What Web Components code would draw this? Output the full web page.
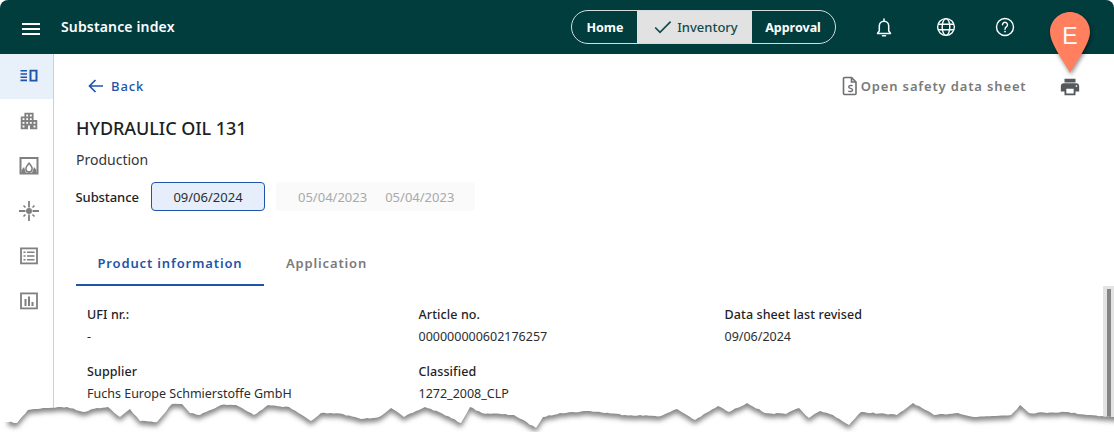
<!DOCTYPE html>
<html lang="en">
<head>
<meta charset="utf-8">
<title>Substance index</title>
<style>
  html, body { margin: 0; background: #fff; }
  body { width: 1114px; height: 432px; overflow: hidden; font-family: "Noto Sans", "Open Sans", sans-serif; }
</style>
</head>
<body>
<app-shell>
  <app-header slot="header" title="Substance index"></app-header>
  <side-nav slot="nav"></side-nav>
  <substance-page slot="main"></substance-page>
</app-shell>
<marker-pin label="E"></marker-pin>
<torn-edge></torn-edge>

<script>
// Small helper so each element only has to declare its markup.
class BaseElement extends HTMLElement {
  constructor() {
    super();
    this.attachShadow({ mode: 'open' });
  }
  connectedCallback() {
    this.shadowRoot.innerHTML = this.render();
  }
}

class AppShell extends BaseElement {
  render() {
    return `
      <style>
        :host { display: grid; grid-template-columns: 54px 1fr; grid-template-rows: 54px 378px; width: 1114px; height: 432px; }
        .head { grid-column: 1 / 3; }
      </style>
      <div class="head"><slot name="header"></slot></div>
      <slot name="nav"></slot>
      <slot name="main"></slot>
    `;
  }
}

class AppHeader extends BaseElement {
  render() {
    return `
      <style>
        :host { display: flex; align-items: center; height: 54px; background: #023d3e; color: #fff; border-radius: 8px 8px 0 0; }
        .menu { width: 18px; height: 12px; margin-left: 22px; display: flex; flex-direction: column; justify-content: space-between; position: relative; top: 2px; }
        .menu i { display: block; height: 2.4px; background: #fff; }
        h1 { margin: 0 0 0 21px; font-size: 14px; font-weight: 600; letter-spacing: .15px; flex: 1; position: relative; top: -1px; }
        .icons { display: flex; align-items: center; width: 278px; }
        .icons svg { display: block; flex: none; }
      </style>
      <div class="menu"><i></i><i></i><i></i></div>
      <h1>${this.getAttribute('title')}</h1>
      <seg-control></seg-control>
      <div class="icons">
        <svg style="margin-left:35px" width="26" height="26" viewBox="0 0 26 26" fill="none" stroke="#fff" stroke-width="1.5">
          <path d="M6.5 19.5h13l-1.8-2.6v-5a4.7 4.7 0 0 0-9.4 0v5z" stroke-linejoin="round"/>
          <path d="M13 5v2M11.5 21.7h3" stroke-linecap="round"/>
        </svg>
        <svg style="margin-left:37px" width="24" height="24" viewBox="0 0 24 24" fill="none" stroke="#fff" stroke-width="1.4">
          <circle cx="12" cy="12" r="8.4"/>
          <ellipse cx="12" cy="12" rx="3.8" ry="8.4"/>
          <path d="M4 9.2h16M4 14.8h16"/>
        </svg>
        <svg style="margin-left:35px" width="24" height="24" viewBox="0 0 24 24" fill="none" stroke="#fff" stroke-width="1.4">
          <circle cx="12" cy="12" r="8.5"/>
          <path d="M9.5 9.8a2.5 2.5 0 1 1 3.8 2.1c-.9.6-1.3 1.1-1.3 2.3" stroke-linecap="round"/>
          <circle cx="12" cy="16.6" r=".9" fill="#fff" stroke="none"/>
        </svg>
      </div>
    `;
  }
}

class SegControl extends BaseElement {
  render() {
    return `
      <style>
        :host { display: flex; height: 34px; width: 265px; box-sizing: border-box; border: 1px solid #d5dcdc; border-radius: 17px; overflow: hidden; font-size: 12.5px; font-weight: 700; color: #fff; }
        div { display: flex; align-items: center; justify-content: center; }
        .home { width: 65px; padding-left: 1px; box-sizing: border-box; }
        .inv { width: 115px; box-sizing: border-box; padding-left: 3px; background: #e2e2e2; color: #134a4b; font-size: 13px; font-weight: 500; gap: 5px; }
        .app { flex: 1; padding-right: 1px; }
        svg { display: block; }
      </style>
      <div class="home">Home</div>
      <div class="inv">
        <svg width="18" height="14" viewBox="0 0 18 14" fill="none" stroke="#134a4b" stroke-width="1.7"><path d="M1.2 7.5 6 12.4 16.6 1.6"/></svg>
        <span>Inventory</span>
      </div>
      <div class="app">Approval</div>
    `;
  }
}

class SideNav extends BaseElement {
  render() {
    const g = '#808080';
    const icons = [
      `<svg width="20" height="16" viewBox="0 0 20 16" fill="#1f55a8"><path d="M1.500 2h6.500v1.500H1.500zM1.500 5.200h6.500v1.500H1.500zM1.500 8.400h6.500v1.500H1.500zM1.500 11.600h6.500v1.600H1.500z"/><path fill-rule="evenodd" d="M10.500 1.800h8v11.700h-8zM12.500 3.600v8.100h4V3.600z"/></svg>`,
      `<svg width="22" height="22" viewBox="0 0 24 24" fill="${g}"><path d="M17 11V3H7v4H3v14h8v-4h2v4h8V11h-4zM7 19H5v-2h2v2zm0-4H5v-2h2v2zm0-4H5V9h2v2zm4 4H9v-2h2v2zm0-4H9V9h2v2zm0-4H9V5h2v2zm4 8h-2v-2h2v2zm0-4h-2V9h2v2zm0-4h-2V5h2v2zm4 12h-2v-2h2v2zm0-4h-2v-2h2v2z"/></svg>`,
      `<svg width="20" height="20" viewBox="0 0 20 20" fill="none" stroke="${g}" stroke-width="2"><rect x="1.500" y="2" width="17" height="15.500"/><path fill="${g}" stroke="none" d="M2.500 17v-3l2.500-3 2 6zM17.500 17v-3l-2.500-3-2 6z"/><path stroke-width="1.500" d="M10 6.600c.5 2 3.100 3.200 3.100 6.200a3.100 3.100 0 0 1-6.200 0c0-2.800 2.600-3.700 3.100-6.200z"/><path fill="${g}" stroke="none" d="M9 16h2v1H9z"/></svg>`,
      `<svg width="22" height="22" viewBox="0 0 22 22" fill="none" stroke="${g}" stroke-width="1.800"><circle cx="11" cy="11" r="3" fill="${g}" stroke="none"/><path d="M11 1v6.500M11 14.500V21M1 11h6.500M14.500 11H21"/><path stroke-width="1.600" d="M5.500 5.500l2 2M14.500 14.500l2 2M16.500 5.500l-2 2M7.500 14.500l-2 2"/></svg>`,
      `<svg width="20" height="20" viewBox="0 0 20 20" fill="none" stroke="${g}" stroke-width="1.800"><rect x="2" y="2.400" width="16" height="15"/><path stroke-width="1.500" d="M4.500 6.200h2M8 6.200h7.500M4.500 10h2M8 10h7.500M4.500 13.800h2M8 13.800h7.500"/></svg>`,
      `<svg width="20" height="20" viewBox="0 0 20 20" fill="none" stroke="${g}" stroke-width="1.800"><rect x="2" y="2.400" width="16" height="15"/><path fill="${g}" stroke="none" d="M5.500 8h2v7h-2zM9 5.500h2V15H9zM12.500 11h2v4h-2z"/></svg>`
    ];
    return `
      <style>
        :host { display: block; width: 54px; box-sizing: border-box; border-right: 1px solid #cfcfcf; background: #fff; }
        div { height: 45px; display: flex; align-items: center; justify-content: center; padding: 0 0 1px 5px; box-sizing: border-box; }
        div.on { background: #e8f1fa; }
        svg { display: block; }
      </style>
      ${icons.map((s, i) => `<div class="${i === 0 ? 'on' : ''}">${s}</div>`).join('')}
    `;
  }
}

class SubstancePage extends BaseElement {
  render() {
    return `
      <style>
        :host { display: flex; flex-direction: column; position: relative; padding: 20px 0 0 22px; box-sizing: border-box; overflow: hidden; color: #1f2326; }
        .bar { display: flex; align-items: center; height: 24px; }
        .back { display: flex; align-items: center; gap: 7px; margin-left: 12px; color: #1f55a8; font-size: 13px; font-weight: 500; letter-spacing: .9px; flex: 1; }
        .sheet { display: flex; align-items: center; gap: 3px; color: #7a7a7a; font-size: 13px; font-weight: 600; letter-spacing: .85px; margin-right: -.5px; }
        .print { margin: 2px 33px 0 33px; display: block; }
        svg { display: block; flex: none; }
        h2 { margin: 18px 0 0; font-size: 18px; line-height: 24px; font-weight: 500; letter-spacing: -.05px; color: #1c1f22; }
        .sub { margin-top: 10px; font-size: 14px; line-height: 20px; color: #33373a; }
        .scroll { position: absolute; right: 0; top: 232px; bottom: 0; width: 11px; background: #e3e3e3; }
        .scroll i { display: block; margin: 3px 0 0 3.500px; width: 4px; height: 200px; background: #858585; }
      </style>
      <div class="bar">
        <div class="back">
          <svg width="16" height="14" viewBox="0 0 16 14" fill="none" stroke="#1f55a8" stroke-width="1.700"><path d="M15 7H2M7.500 1 1.500 7l6 6"/></svg>
          <span>Back</span>
        </div>
        <div class="sheet">
          <svg width="16" height="20" viewBox="0 0 16 20" fill="none" stroke="#6e6e6e" stroke-width="1.600"><path d="M2.500 1.500h7l4.500 4.500v11.500a1 1 0 0 1-1 1H2.500a1 1 0 0 1-1-1v-15a1 1 0 0 1 1-1z"/><path d="M9.500 1.500V6H14"/><path stroke-width="1.400" d="M10.500 10c-.6-.8-3.800-1-3.800.9 0 1.900 3.900 1.200 3.900 3.200 0 1.900-3.500 1.700-4.200.7"/></svg>
          <span>Open safety data sheet</span>
        </div>
        <svg class="print" width="22" height="22" viewBox="0 0 24 24" fill="#55595c"><path d="M19 8H5c-1.660 0-3 1.340-3 3v6h4v4h12v-4h4v-6c0-1.660-1.340-3-3-3zm-3 11H8v-5h8v5zm3-7c-.550 0-1-.450-1-1s.450-1 1-1 1 .450 1 1-.450 1-1 1zm-1-9H6v4h12V3z"/></svg>
      </div>
      <h2>HYDRAULIC OIL 131</h2>
      <div class="sub">Production</div>
      <version-row label="Substance" active="09/06/2024" dates="05/04/2023,05/04/2023"></version-row>
      <tab-bar tabs="Product information,Application"></tab-bar>
      <field-grid>
        <field-item label="UFI nr.:" value="-"></field-item>
        <field-item label="Article no." value="000000000602176257"></field-item>
        <field-item label="Data sheet last revised" value="09/06/2024"></field-item>
        <field-item label="Supplier" value="Fuchs Europe Schmierstoffe GmbH"></field-item>
        <field-item label="Classified" value="1272_2008_CLP"></field-item>
      </field-grid>
      <div class="scroll"><i></i></div>
    `;
  }
}

class VersionRow extends BaseElement {
  render() {
    const dates = this.getAttribute('dates').split(',');
    return `
      <style>
        :host { display: flex; align-items: center; height: 29px; margin-top: 12px; font-size: 13px; }
        .lbl { width: 75px; margin-left: -.5px; padding-right: .5px; font-weight: 500; letter-spacing: -.08px; color: #1f2326; }
        .on { width: 114px; height: 29px; box-sizing: border-box; border: 1px solid #1f55a8; border-radius: 4px; background: #e5eefa; display: flex; align-items: center; justify-content: center; color: #2a2e31; }
        .off { display: flex; align-items: center; gap: 18px; height: 29px; width: 199px; box-sizing: border-box; margin-left: 11px; padding-left: 22px; border-radius: 4px; background: #fafafa; color: #a9a9a9; }
      </style>
      <span class="lbl">${this.getAttribute('label')}</span>
      <div class="on">${this.getAttribute('active')}</div>
      <div class="off">${dates.map(d => `<span>${d}</span>`).join('')}</div>
    `;
  }
}

class TabBar extends BaseElement {
  render() {
    const tabs = this.getAttribute('tabs').split(',');
    return `
      <style>
        :host { display: flex; height: 43px; margin-top: 32px; font-size: 13px; font-weight: 600; letter-spacing: .85px; color: #7a7a7a; }
        div { height: 43px; box-sizing: border-box; padding: 11px 22px 0; }
        .on { width: 188px; padding-left: 21.5px; color: #1f55a8; border-bottom: 2px solid #1f55a8; white-space: nowrap; }
      </style>
      ${tabs.map((t, i) => `<div class="${i === 0 ? 'on' : ''}">${t}</div>`).join('')}
    `;
  }
}

class FieldGrid extends BaseElement {
  render() {
    return `
      <style>
        :host { display: grid; grid-template-columns: 331.5px 306px 1fr; grid-auto-rows: 57px; padding: 18px 0 0 11px; }
      </style>
      <slot></slot>
    `;
  }
}

class FieldItem extends BaseElement {
  render() {
    return `
      <style>
        :host { display: block; font-size: 12.5px; line-height: 22px; color: #2a2e31; }
        b { display: block; font-weight: 500; letter-spacing: .1px; color: #1f2326; }
      </style>
      <b>${this.getAttribute('label')}</b>
      <span>${this.getAttribute('value')}</span>
    `;
  }
}

class MarkerPin extends BaseElement {
  render() {
    return `
      <style>
        :host { position: absolute; left: 1048px; top: 10px; width: 44px; height: 68px; }
        svg { position: absolute; inset: 0; filter: drop-shadow(1px 2px 2px rgba(0,0,0,.45)); }
        span { position: absolute; left: 0; right: 0; top: 11px; text-align: center; color: #fff; font: 400 23px/30px "Liberation Sans", sans-serif; }
      </style>
      <svg width="44" height="68" viewBox="0 0 44 68"><path fill="#ff7f5e" d="M22 2C11 2 2 11 2 22c0 5 2.200 10 5.500 16.500C12 47 18.500 56 22 63c3.500-7 10-16 14.500-24.500C39.800 32 42 27 42 22 42 11 33 2 22 2z"/></svg>
      <span>${this.getAttribute('label')}</span>
    `;
  }
}

// The reference is cut off with a hand-torn paper edge; the outline is traced,
// the fine jitter comes from a small seeded generator.
class TornEdge extends BaseElement {
  render() {
    const pts = [[8,422],[17,423],[28,410],[43,408],[67,407],[83,412],[97,408],[108,407],[120,417],[130,409],[140,421],[157,422],[172,404],[182,404],[190,413],[200,415],[221,405],[236,405],[254,415],[268,405],[289,407],[311,421],[321,413],[343,414],[361,419],[379,417],[391,408],[404,417],[425,407],[439,412],[461,423],[470,407],[482,413],[514,415],[536,428],[543,417],[560,413],[590,411],[625,415],[661,416],[677,409],[695,420],[718,406],[729,412],[747,403],[765,413],[786,414],[799,408],[809,418],[820,411],[833,415],[849,425],[861,412],[897,415],[913,403],[934,415],[958,413],[974,417],[1011,415],[1020,405],[1029,413],[1065,412],[1090,415],[1114,417]];
    let seed = 7;
    const rnd = () => { seed = (seed * 16807) % 2147483647; return seed / 2147483647 - 0.5; };
    const line = [];
    pts.forEach((p, i) => {
      const next = pts[i + 1];
      if (!next) { line.push(p); return; }
      const steps = Math.max(1, Math.round((next[0] - p[0]) / 3));
      for (let s = 0; s < steps; s++) {
        const t = s / steps;
        const j = s === 0 ? 0 : rnd() * 1.1;
        line.push([p[0] + (next[0] - p[0]) * t, p[1] + (next[1] - p[1]) * t + j]);
      }
    });
    const d = 'M' + line.map(p => p[0].toFixed(1) + ' ' + p[1].toFixed(1)).join('L');
    return `
      <style>
        :host { position: absolute; left: 0; top: 390px; width: 1114px; height: 42px; }
        svg { display: block; }
      </style>
      <svg width="1114" height="42" viewBox="0 390 1114 42">
        <defs>
          <clipPath id="below"><path d="${d}L1114 432L0 432L0 422Z"/></clipPath>
          <filter id="soft" x="-2%" y="-50%" width="104%" height="200%"><feGaussianBlur stdDeviation="2.4"/></filter>
        </defs>
        <path d="${d}L1114 432L0 432L0 422Z" fill="#fff"/>
        <g clip-path="url(#below)">
          <path d="${d}L1130 417L1130 370L8 370Z" transform="translate(0 4)" fill="#858585" filter="url(#soft)"/>
        </g>
      </svg>
    `;
  }
}

customElements.define('app-shell', AppShell);
customElements.define('app-header', AppHeader);
customElements.define('seg-control', SegControl);
customElements.define('side-nav', SideNav);
customElements.define('substance-page', SubstancePage);
customElements.define('version-row', VersionRow);
customElements.define('tab-bar', TabBar);
customElements.define('field-grid', FieldGrid);
customElements.define('field-item', FieldItem);
customElements.define('marker-pin', MarkerPin);
customElements.define('torn-edge', TornEdge);
</script>
</body>
</html>
